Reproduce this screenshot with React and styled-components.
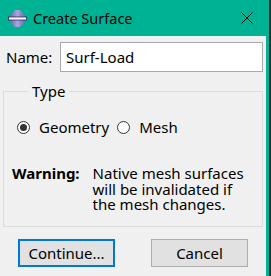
import React from 'react';
import styled, { createGlobalStyle } from 'styled-components';

const GlobalStyle = createGlobalStyle`
  html, body {
    margin: 0;
    padding: 0;
    background: #f0f0f0;
  }
  body {
    font-family: "Noto Sans", "Liberation Sans", sans-serif;
    color: #000;
  }
`;

const Window = styled.div`
  width: 271px;
  height: 276px;
  box-sizing: border-box;
  display: flex;
  flex-direction: column;
  background: #00b294;
  border-right: 2px solid #1d2a33;
  overflow: hidden;
`;

const TitleBar = styled.div`
  height: 36px;
  flex: none;
  display: flex;
  align-items: center;
  padding: 0 16px 0 8px;
`;

const Title = styled.div`
  flex: 1;
  margin-left: 6px;
  font-size: 14.5px;
  line-height: 20px;
  color: #000;
`;

const Body = styled.div`
  flex: 1;
  margin-right: 3px;
  background: #f0f0f0;
  padding: 6px 3px 0 3px;
  display: flex;
  flex-direction: column;
  font-size: 15px;
`;

const NameRow = styled.div`
  display: flex;
  align-items: center;
  padding-left: 3px;
`;

const Label = styled.span`
  width: 54px;
  line-height: 20px;
`;

const TextInput = styled.div`
  flex: 1;
  height: 30px;
  box-sizing: border-box;
  border: 1px solid #a9a9a9;
  background: #fff;
  padding-left: 5px;
  display: flex;
  align-items: center;
`;

const Group = styled.fieldset`
  margin: 10px 0 0 0;
  padding: 17px 10px 13px 13px;
  border: 1px solid #dcdcdc;
  min-width: 0;
`;

const Legend = styled.legend`
  margin-left: 11px;
  padding: 0 4px;
  line-height: 18px;
`;

const RadioRow = styled.div`
  display: flex;
  align-items: center;
  height: 20px;
`;

const RadioOption = styled.label`
  display: flex;
  align-items: center;
  gap: 9px;
  margin-right: 8px;
  line-height: 20px;
`;

const RadioCircle = styled.span`
  width: 13px;
  height: 13px;
  box-sizing: border-box;
  border: 1px solid #333;
  border-radius: 50%;
  background: #fff;
  display: flex;
  align-items: center;
  justify-content: center;

  &::after {
    content: '';
    width: 7px;
    height: 7px;
    border-radius: 50%;
    background: #333;
    display: ${(p) => (p.checked ? 'block' : 'none')};
  }
`;

const Warning = styled.div`
  margin-top: 29px;
  margin-left: -5px;
  display: grid;
  grid-template-columns: auto 1fr;
  column-gap: 13px;
  line-height: 15.5px;
`;

const WarningLabel = styled.span`
  font-weight: bold;
`;

const ButtonRow = styled.div`
  display: flex;
  padding-left: 15px;
  gap: 36px;
  margin-top: 12px;
`;

const Button = styled.div`
  width: 97px;
  height: 28px;
  box-sizing: border-box;
  background: #e1e1e1;
  border: ${(p) => (p.focused ? '2px solid #0078d7' : '1px solid #adadad')};
  display: flex;
  align-items: center;
  justify-content: center;
  line-height: 20px;
`;

function AppIcon() {
  return (
    <svg width="19" height="17" viewBox="0 0 19 17">
      <defs>
        <linearGradient id="ig" x1="0" x2="1" y1="0" y2="0">
          <stop offset="0" stopColor="#5c5aa8" />
          <stop offset="0.5" stopColor="#a9a6e0" />
          <stop offset="1" stopColor="#5c5aa8" />
        </linearGradient>
      </defs>
      <path d="M7 0 H12 Q15 3 18.5 7 V10 Q15 14 12 17 H7 Q4 14 0.5 10 V7 Q4 3 7 0 Z" fill="url(#ig)" />
      <rect x="0.5" y="7" width="18" height="3" fill="#fff" stroke="#2a2a55" strokeWidth="0.8" />
    </svg>
  );
}

function CloseIcon() {
  return (
    <svg width="12" height="12" viewBox="0 0 12 12">
      <path d="M0.5 0.5 L11.5 11.5 M11.5 0.5 L0.5 11.5" stroke="#000" strokeWidth="1" />
    </svg>
  );
}

export default function App() {
  return (
    <>
      <GlobalStyle />
      <Window>
        <TitleBar>
          <AppIcon />
          <Title>Create Surface</Title>
          <CloseIcon />
        </TitleBar>
        <Body>
          <NameRow>
            <Label>Name:</Label>
            <TextInput>Surf-Load</TextInput>
          </NameRow>
          <Group>
            <Legend>Type</Legend>
            <RadioRow>
              <RadioOption>
                <RadioCircle checked />
                Geometry
              </RadioOption>
              <RadioOption>
                <RadioCircle />
                Mesh
              </RadioOption>
            </RadioRow>
            <Warning>
              <WarningLabel>Warning:</WarningLabel>
              <span>
                Native mesh surfaces
                <br />
                will be invalidated if
                <br />
                the mesh changes.
              </span>
            </Warning>
          </Group>
          <ButtonRow>
            <Button focused>Continue...</Button>
            <Button>Cancel</Button>
          </ButtonRow>
        </Body>
      </Window>
    </>
  );
}
